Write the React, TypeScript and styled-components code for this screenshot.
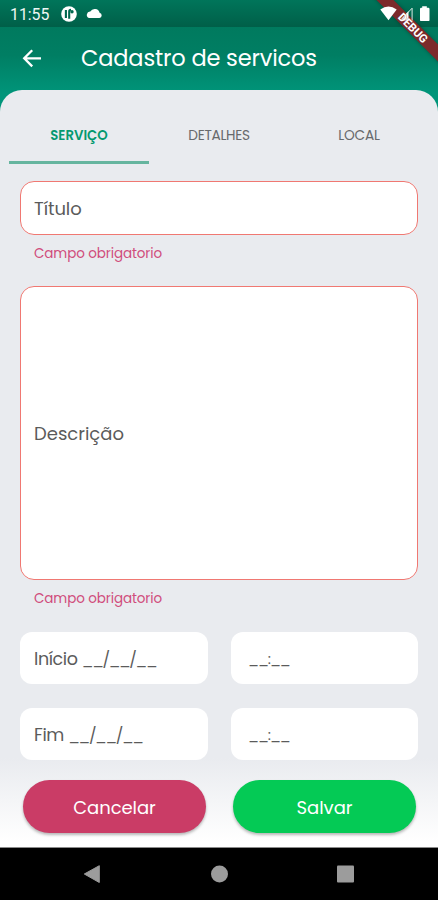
import React from "react";
import styled, { createGlobalStyle } from "styled-components";

const GlobalStyle = createGlobalStyle`
  * { box-sizing: border-box; }
  body { margin: 0; background: #000; font-family: Poppins, Inter, "Liberation Sans", sans-serif; }
`;

const Screen = styled.div`
  position: relative;
  width: 438px;
  height: 900px;
  overflow: hidden;
  display: flex;
  flex-direction: column;
  background: linear-gradient(#007a5e 27px, #007e63 55px, #00957a 94px, #00957a);
`;

const Label = styled.span<{ $size: number; $spacing?: number; $weight?: number }>`
  font-size: ${(p) => p.$size}px;
  letter-spacing: ${(p) => p.$spacing ?? 0}px;
  font-weight: ${(p) => p.$weight ?? 400};
  white-space: pre;
`;

const StatusBar = styled.div`
  flex: none;
  height: 27px;
  display: flex;
  align-items: center;
  padding: 2px 8px 0 10px;
  color: #eef7f4;
  background: linear-gradient(#00755a, #005f48);
`;

const Clock = styled.span`
  width: 51px;
  font: 400 15.8px/20px Roboto, sans-serif;
`;

const StatusIcons = styled.div`
  position: absolute;
  left: 380px;
  top: 6px;
  display: flex;
`;

const Header = styled.header`
  flex: none;
  height: 63px;
  display: flex;
  align-items: center;
  padding: 0 22px 1px;
  gap: 39px;
  color: #fff;
`;

const Panel = styled.main`
  flex: none;
  height: 758px;
  border-radius: 22px 22px 0 0;
  background: linear-gradient(#e9ebef 0 668px, #fff 752px);
  border-bottom: 1px solid #8b8b8b;
  display: flex;
  flex-direction: column;
`;

const Tabs = styled.nav`
  display: grid;
  grid-template-columns: repeat(3, 140px);
  height: 74px;
  margin-left: 9px;
`;

const Tab = styled.div<{ $active?: boolean }>`
  display: flex;
  align-items: center;
  justify-content: center;
  padding-top: 20px;
  color: ${(p) => (p.$active ? "#05996f" : "#67696c")};
  border-bottom: 3px solid ${(p) => (p.$active ? "#66b59f" : "transparent")};
`;

const Form = styled.div`
  display: flex;
  flex-direction: column;
  padding: 17px 20px 0;
`;

const Field = styled.div<{ $height: number; $invalid?: boolean; $inset?: number; $drop?: number }>`
  height: ${(p) => p.$height}px;
  display: flex;
  align-items: center;
  padding-top: ${(p) => p.$drop ?? 0}px;
  padding-left: ${(p) => p.$inset ?? 14}px;
  border: ${(p) => (p.$invalid ? "1px solid #f07872" : "0")};
  border-radius: ${(p) => (p.$invalid ? 14 : 12)}px;
  background: #fff;
  color: #5b5b5b;
`;

const ErrorText = styled.div`
  height: 51px;
  padding: 9px 0 0 14px;
  line-height: 18px;
  color: #d04d7c;
`;

const Pair = styled.div`
  display: grid;
  grid-template-columns: 188px 187px;
  column-gap: 23px;
  margin-bottom: 24px;
`;

const Schedule = styled.section`
  padding-top: 1px;
`;

const Actions = styled.div`
  display: grid;
  grid-template-columns: 183px 183px;
  column-gap: 27px;
  padding: 0 3px;
  margin-top: -4px;
`;

const Button = styled.button<{ $color: string }>`
  height: 53px;
  padding: 2px 0 0;
  border: 0;
  border-radius: 27px;
  background: ${(p) => p.$color};
  color: #fff;
  font-family: inherit;
  box-shadow: 0 2px 3px rgba(0, 0, 0, 0.28);
`;

const SystemNav = styled.div`
  flex: 1;
  display: flex;
  align-items: center;
  padding-left: 83px;
  gap: 108px;
  background: #000;
`;

const Ribbon = styled.div`
  position: absolute;
  left: 362.5px;
  top: 21.5px;
  width: 100px;
  height: 12px;
  transform: rotate(45deg);
  background: #7c2a2b;
  box-shadow: 0 0 4px rgba(0, 0, 0, 0.3);
`;

const RibbonText = styled(Ribbon)`
  background: none;
  box-shadow: none;
  color: #fff;
  text-align: center;
  font: 700 11.5px/12px Roboto, sans-serif;
  text-shadow: 0 0 1px #7c2a2b;
`;

export default function App() {
  return (
    <>
      <GlobalStyle />
      <Screen>
        <StatusBar>
          <Clock>11:55</Clock>
          <svg width="42" height="18" viewBox="0 0 42 18">
            <circle cx="8" cy="8" r="7.8" fill="#fff" />
            <path d="M4.9 4v8M8.2 12.8V5.6Q8.2 3.8 10 3.8" fill="none" stroke="#00684e" strokeWidth="2.1" />
            <circle cx="11" cy="5.8" r="1.7" fill="#00684e" />
            <path d="M28 12h10.4a2.7 2.7 0 0 0 .2-5.3 5.1 5.1 0 0 0-9.3-1.1A3.3 3.3 0 0 0 28 12z" fill="#fff" />
          </svg>
        </StatusBar>
        <Header>
          <svg width="20" height="20" viewBox="0 0 20 20" fill="none" stroke="#fff" strokeWidth="2.3">
            <path d="M19 10.3H2.5M10.2 2.2 2.2 10.3l8 8.1" />
          </svg>
          <Label $size={22.5} $spacing={-0.15}>Cadastro de servicos</Label>
        </Header>
        <Panel>
          <Tabs>
            <Tab $active><Label $size={13.3} $weight={600}>SERVIÇO</Label></Tab>
            <Tab><Label $size={13.7} $spacing={-0.3}>DETALHES</Label></Tab>
            <Tab><Label $size={13.7} $spacing={-0.2}>LOCAL</Label></Tab>
          </Tabs>
          <Form>
            <Field $height={54} $invalid $inset={13}><Label $size={18} $spacing={-0.1}>Título</Label></Field>
            <ErrorText><Label $size={13.5} $spacing={-0.1}>Campo obrigatorio</Label></ErrorText>
            <Field $height={294} $invalid $inset={13}><Label $size={18}>Descrição</Label></Field>
            <ErrorText><Label $size={13.5} $spacing={-0.1}>Campo obrigatorio</Label></ErrorText>
            <Schedule>
              <Pair>
                <Field $height={52} $drop={2}>
                  <Label $size={17.5} $spacing={-0.4}>Início </Label>
                  <Label $size={16} $spacing={-1.4}>__/__/__</Label>
                </Field>
                <Field $height={52} $inset={17}><Label $size={15} $spacing={-1.1}>__:__</Label></Field>
              </Pair>
              <Pair>
                <Field $height={52} $drop={2}>
                  <Label $size={17.5} $spacing={-0.4}>Fim </Label>
                  <Label $size={16} $spacing={-1.4}>__/__/__</Label>
                </Field>
                <Field $height={52} $inset={17}><Label $size={15} $spacing={-1.1}>__:__</Label></Field>
              </Pair>
            </Schedule>
            <Actions>
              <Button $color="#ca3c66"><Label $size={18} $spacing={-0.05}>Cancelar</Label></Button>
              <Button $color="#04ca55"><Label $size={18}>Salvar</Label></Button>
            </Actions>
          </Form>
        </Panel>
        <SystemNav>
          <svg width="18" height="18" viewBox="0 0 18 18"><path d="M16.3 .7v16.8L1.3 9z" fill="#9c9c9c" stroke="#9c9c9c" strokeLinejoin="round" /></svg>
          <svg width="20" height="18" viewBox="0 0 20 18"><circle cx="10.5" cy="9" r="8.5" fill="#9c9c9c" /></svg>
          <svg width="18" height="18" viewBox="0 0 18 18"><rect x="0" y=".5" width="17" height="17" rx="1" fill="#9c9c9c" /></svg>
        </SystemNav>
        <Ribbon />
        <StatusIcons>
          <svg width="52" height="18" viewBox="0 0 52 18">
            <path d="M.3 3.6Q8.5-2.7 16.7 3.6L8.5 14.2z" fill="#fff" />
            <path d="M28.5 5v9.6H20z" fill="#fff" />
            <path d="M20.5 14.3 32.1 2.2v12.4" fill="none" stroke="#dcebe5" />
            <path d="M42.2 1.7V.3h4.6v1.4h1.5q1.2 0 1.2 1.2v11q0 1.2-1.2 1.2h-7.1q-1.2 0-1.2-1.2v-11q0-1.2 1.2-1.2z" fill="#fff" />
          </svg>
        </StatusIcons>
        <RibbonText>DEBUG</RibbonText>
      </Screen>
    </>
  );
}
